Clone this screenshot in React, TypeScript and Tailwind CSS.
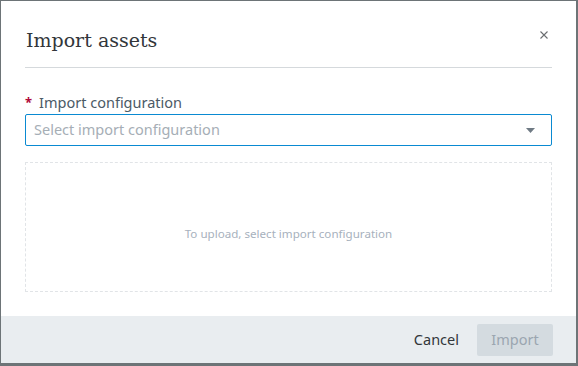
export default function App() {
  return (
    <div className="w-[578px] h-[366px] bg-[#6d7477] pt-px pl-px" style={{ fontFamily: '"Noto Sans", "Open Sans", sans-serif' }}>
      <div className="w-[575px] h-[362px] bg-white flex flex-col">
        <div className="px-6 pt-[24px]">
          <div className="flex items-start justify-between">
            <h2 className="text-[19px] leading-[30px] text-[#32363a] pl-px" style={{ fontFamily: '"DejaVu Serif", "Liberation Serif", serif' }}>
              Import assets
            </h2>
            <button className="mt-[6px] mr-[4px] w-[8px] h-[8px] text-[#6a6d70]">
              <svg viewBox="0 0 8 8" width="8" height="8">
                <path d="M0.5 0.5 L7.5 7.5 M7.5 0.5 L0.5 7.5" stroke="currentColor" strokeWidth="1.1" />
              </svg>
            </button>
          </div>
          <div className="mt-[12px] h-px bg-[#d5d9dc]" />
        </div>

        <div className="px-6 pt-[24px] flex-1">
          <label className="flex items-center gap-[7px] text-[14.5px] leading-[20px] text-[#4b5a66]">
            <span className="text-[#b0073a] text-[13px] font-bold">*</span>
            Import configuration
          </label>
          <div className="mt-[2px] h-[32px] border border-[#0a8ad2] rounded-[2px] flex items-center justify-between pl-[8px] pr-[16px]">
            <span className="text-[14.5px] text-[#a6aeb6]">Select import configuration</span>
            <svg width="9" height="5" viewBox="0 0 9 5">
              <path d="M0 0 H9 L4.5 5 Z" fill="#6f7a84" />
            </svg>
          </div>
          <div className="mt-[16px] h-[130px] border border-dashed border-[#e1e4e7] flex items-center justify-center">
            <span className="text-[11.6px] text-[#a7b1bd] mt-[14px]">To upload, select import configuration</span>
          </div>
        </div>

        <div className="h-[47px] bg-[#e9edf0] flex items-center justify-end gap-[18px] pl-6 pr-[23px]">
          <button className="text-[14.5px] text-[#32363a]">Cancel</button>
          <button className="h-[32px] w-[76px] rounded-[2px] bg-[#d4dbe0] text-[14.5px] text-[#9ba6b0]">Import</button>
        </div>
      </div>
    </div>
  );
}
